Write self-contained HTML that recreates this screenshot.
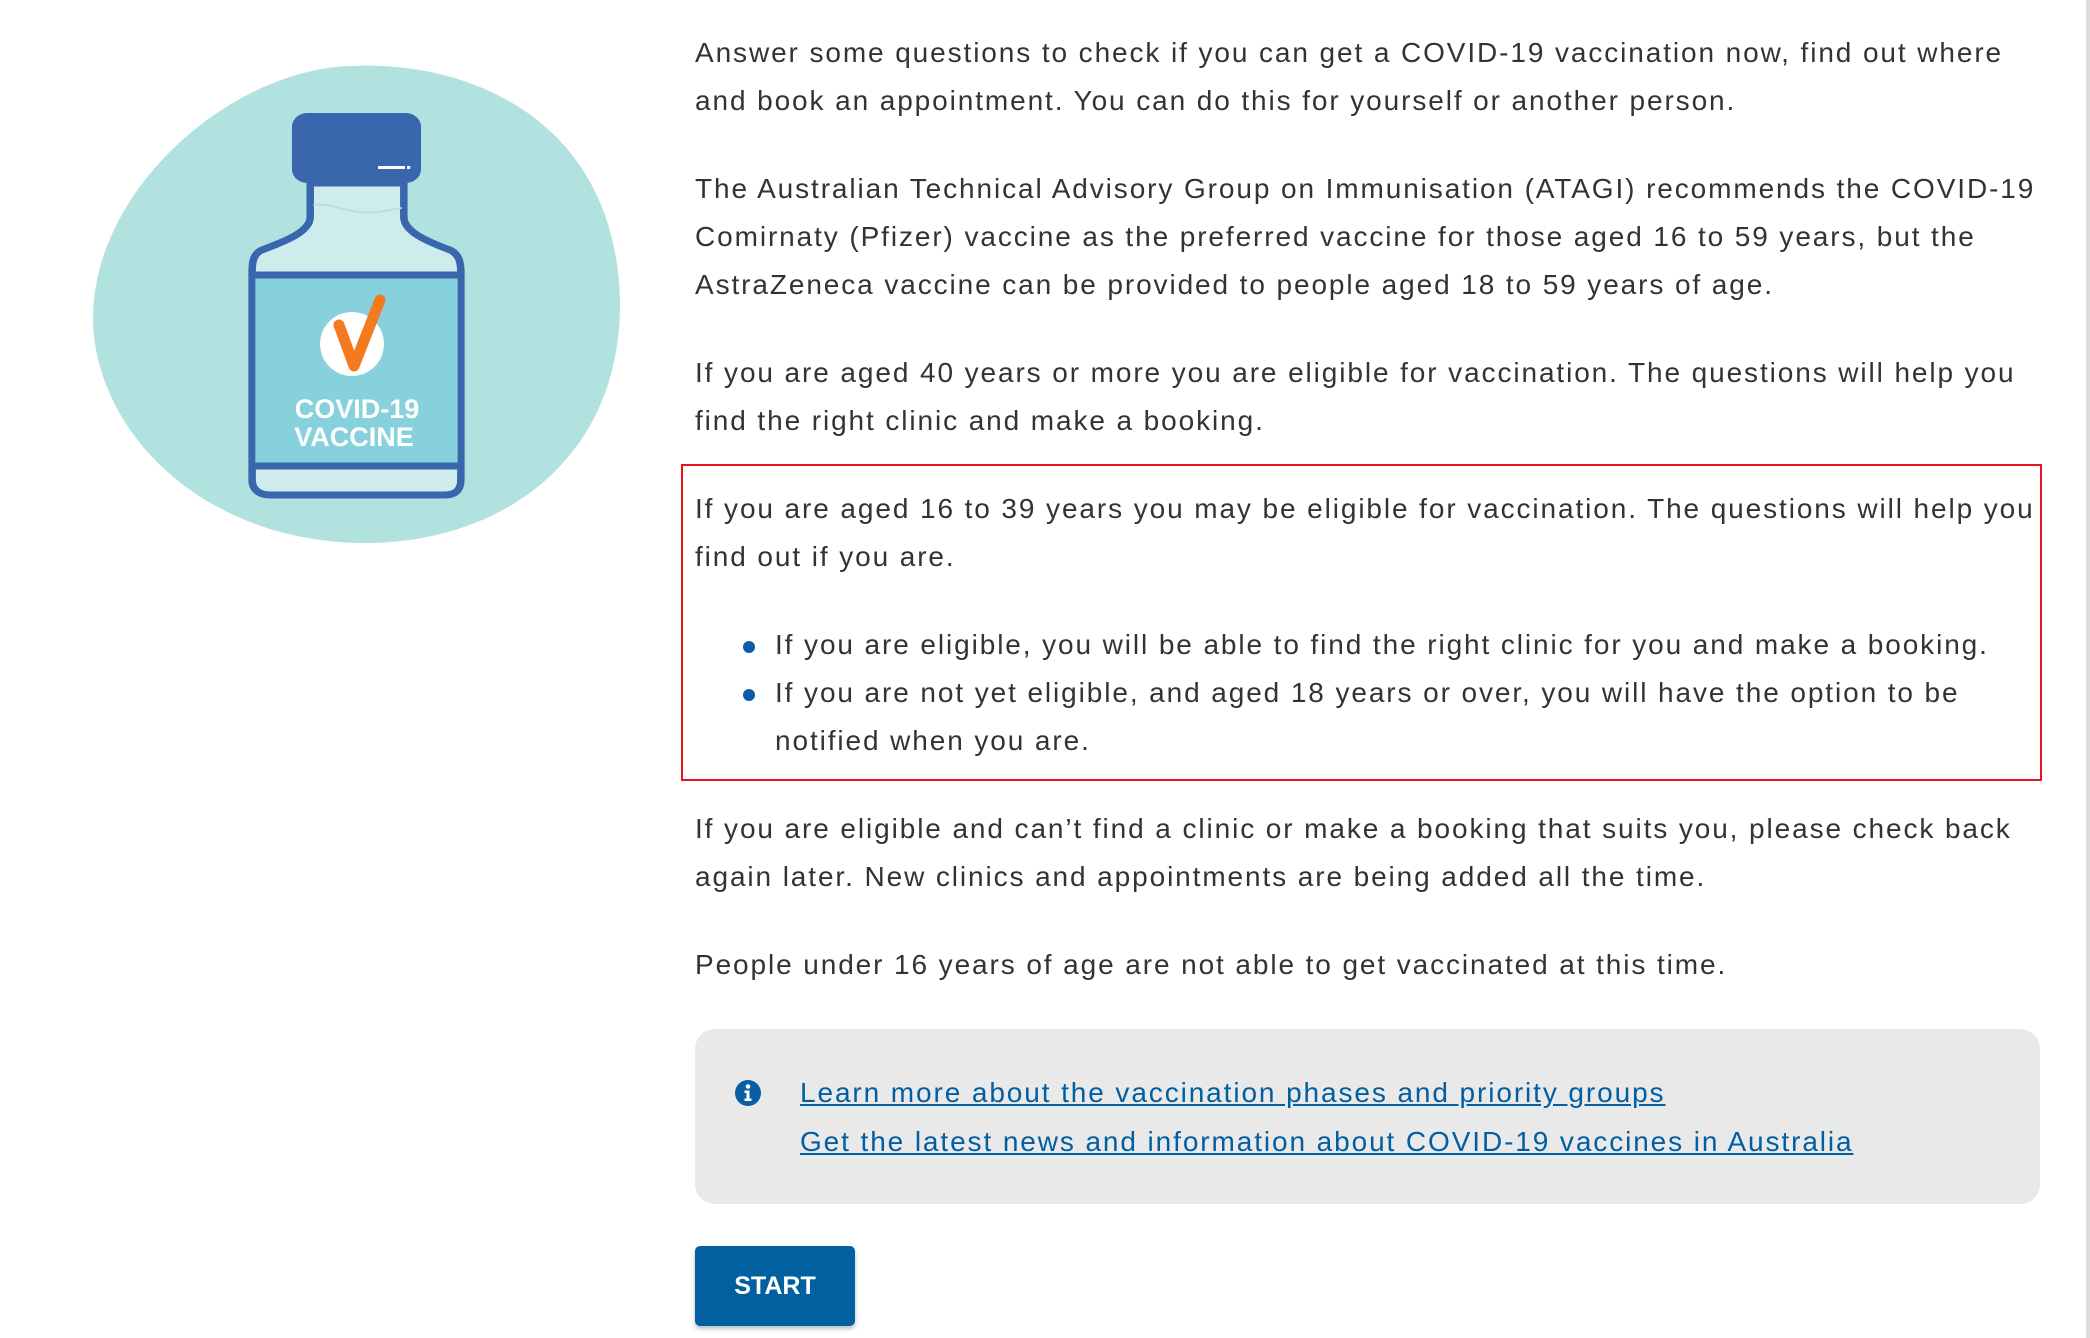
<!DOCTYPE html>
<html><head><meta charset="utf-8"><style>
html,body{margin:0;padding:0;background:#fff;}
body{width:2090px;height:1338px;position:relative;overflow:hidden;font-family:"Liberation Sans",Arial,sans-serif;color:#333;}
.t{position:absolute;left:695px;font-size:28px;letter-spacing:1.9px;line-height:48px;white-space:nowrap;}
.redbox{position:absolute;left:681px;top:464px;width:1357px;height:313px;border:2px solid #e8141b;}
.dot{position:absolute;width:12px;height:12px;border-radius:50%;background:#0a5ea3;}
.gray{position:absolute;left:695px;top:1029px;width:1345px;height:175px;background:#e9e9e9;border-radius:20px;}
.lk{position:absolute;left:800px;font-size:28px;letter-spacing:1.9px;line-height:48px;color:#005ea2;text-decoration:underline;white-space:nowrap;}
.btn{position:absolute;left:695px;top:1246px;width:160px;height:80px;background:#0060a0;border-radius:5px;color:#fff;font-weight:bold;font-size:25px;line-height:80px;text-align:center;box-shadow:0 3px 5px rgba(0,0,0,.25);}
.sb{position:absolute;left:2086px;top:0;width:4px;height:1338px;background:#ddd;}
</style></head><body>
<svg width="700" height="600" style="position:absolute;left:0;top:0">
<path d="M350 66 C470 60 615 120 620 300 C622 460 500 545 360 543 C200 540 95 430 93 320 C92 190 230 70 350 66 Z" fill="#b2e2df"/>
<g transform="matrix(1.076 0 0 1 -7.2 0)">
<path d="M295 183 L295 217 C295 232 270 242 250 250 C242 254 241 262 241 272 L241 480 C241 490 248 495 258 495 L420 495 C430 495 435 490 435 480 L435 272 C435 262 433 254 425 250 C405 242 382 232 382 217 L382 183 Z" fill="#ceecec" stroke="#3a66ae" stroke-width="7" stroke-linejoin="round"/>
<rect x="244" y="275" width="188" height="190" fill="#86d1dc"/>
<line x1="241" y1="275" x2="435" y2="275" stroke="#3a66ae" stroke-width="7"/>
<line x1="241" y1="466" x2="435" y2="466" stroke="#3a66ae" stroke-width="7"/>
<path d="M298 205 C320 203 330 215 358 212 C370 210 378 208 380 208" fill="none" stroke="#b9dde8" stroke-width="2"/>
<rect x="278" y="113" width="120" height="70" rx="14" fill="#3a66ae"/>
<rect x="358" y="166" width="25" height="3" fill="#fff"/><rect x="385" y="166" width="3" height="3" fill="#fff"/>
</g>
<circle cx="352" cy="344" r="32" fill="#fff"/>
<path d="M339 325 L354 366 L380 300" fill="none" stroke="#f47a20" stroke-width="11" stroke-linecap="round" stroke-linejoin="round"/>
<text x="357" y="418" text-anchor="middle" font-family="Liberation Sans,sans-serif" font-weight="bold" font-size="27" fill="#fff">COVID-19</text>
<text x="354" y="446" text-anchor="middle" font-family="Liberation Sans,sans-serif" font-weight="bold" font-size="27" fill="#fff">VACCINE</text>
</svg>
<div class="t" style="top:29px">Answer some questions to check if you can get a COVID-19 vaccination now, find out where<br>and book an appointment. You can do this for yourself or another person.</div>
<div class="t" style="top:165px">The Australian Technical Advisory Group on Immunisation (ATAGI) recommends the COVID-19<br>Comirnaty (Pfizer) vaccine as the preferred vaccine for those aged 16 to 59 years, but the<br>AstraZeneca vaccine can be provided to people aged 18 to 59 years of age.</div>
<div class="t" style="top:349px">If you are aged 40 years or more you are eligible for vaccination. The questions will help you<br>find the right clinic and make a booking.</div>
<div class="redbox"></div>
<div class="t" style="top:485px">If you are aged 16 to 39 years you may be eligible for vaccination. The questions will help you<br>find out if you are.</div>
<div class="dot" style="left:743px;top:641px"></div>
<div class="dot" style="left:743px;top:689px"></div>
<div class="t" style="left:775px;top:621px">If you are eligible, you will be able to find the right clinic for you and make a booking.<br>If you are not yet eligible, and aged 18 years or over, you will have the option to be<br>notified when you are.</div>
<div class="t" style="top:805px">If you are eligible and can’t find a clinic or make a booking that suits you, please check back<br>again later. New clinics and appointments are being added all the time.</div>
<div class="t" style="top:941px">People under 16 years of age are not able to get vaccinated at this time.</div>
<div class="gray"></div>
<svg width="28" height="28" style="position:absolute;left:734px;top:1079px" viewBox="0 0 28 28"><circle cx="14" cy="14" r="13" fill="#0a5ea3"/><circle cx="14" cy="7.5" r="2.3" fill="#fff"/><path d="M10.5 11.5 H15.5 V19.5 H17.5 V22 H10.5 V19.5 H12.5 V14 H10.5 Z" fill="#fff"/></svg>
<div class="lk" style="top:1069px">Learn more about the vaccination phases and priority groups</div>
<div class="lk" style="top:1118px">Get the latest news and information about COVID-19 vaccines in Australia</div>
<div class="btn">START</div>
<div class="sb"></div>
</body></html>
